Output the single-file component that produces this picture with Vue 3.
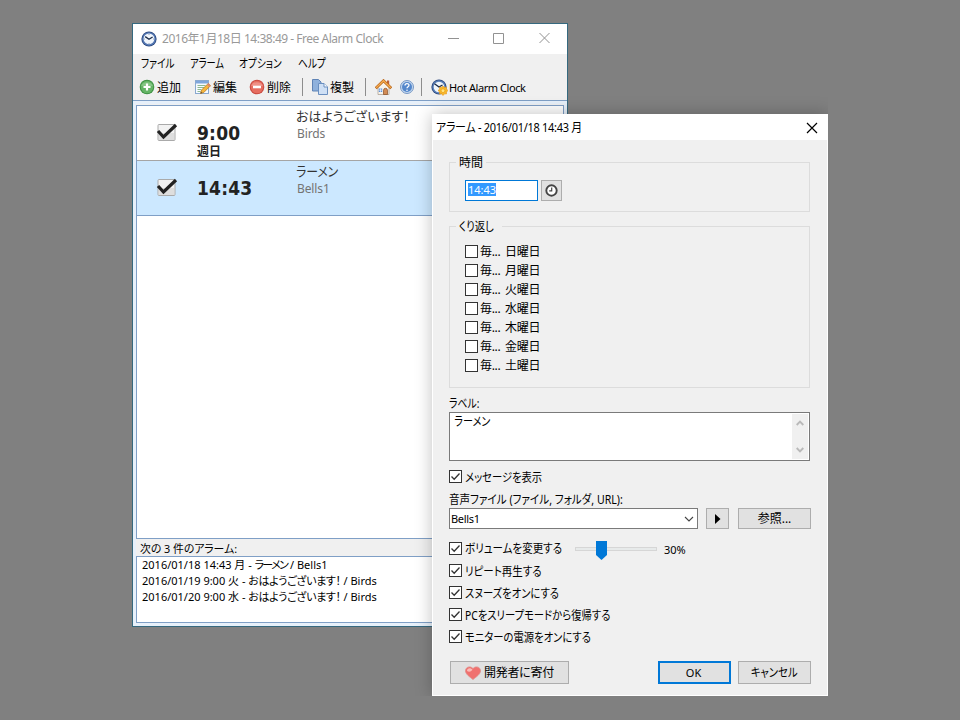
<script setup>
import { ref } from 'vue'

const menus = [
    { text: 'ファイル', key: 'file' },
    { text: 'アラーム', key: 'alarm' },
    { text: 'オプション', key: 'options' },
    { text: 'ヘルプ', key: 'help' }
]

const alarms = ref([
    { id: 1, time: '9:00', days: '週日', label: 'おはようございます！', sound: 'Birds', selected: false },
    { id: 2, time: '14:43', days: '', label: 'ラーメン', sound: 'Bells1', selected: true }
])

const upcoming = [
    { when: '2016/01/18 14:43 月 - ', label: 'ラーメン', sound: ' / Bells1', kana: 'katakana' },
    { when: '2016/01/19 9:00 火 - ', label: 'おはようございます！', sound: ' / Birds', kana: 'hiragana' },
    { when: '2016/01/20 9:00 水 - ', label: 'おはようございます！', sound: ' / Birds', kana: 'hiragana' }
]

const weekdays = ['日曜日', '月曜日', '火曜日', '水曜日', '木曜日', '金曜日', '土曜日']

const switches = [
    { text: 'リピート再生する', key: 'repeat' },
    { text: 'スヌーズをオンにする', key: 'snooze' },
    { text: 'PCをスリープモードから復帰する', key: 'wake' },
    { text: 'モニターの電源をオンにする', key: 'monitor' }
]

const volume = ref(30)
</script>

<template>
  <div class="desktop">
    <!-- Main window -->
    <div class="window main-window">
      <div class="titlebar">
        <svg class="app-icon" width="16" height="16" viewBox="0 0 16 16">
          <circle cx="8" cy="8" r="7.6" fill="#2b477c" />
          <circle cx="8" cy="8" r="6.8" fill="#5478b4" />
          <circle cx="8" cy="7.8" r="5.4" fill="#f1f6fc" />
          <path d="M4.200 5.600L8 8.200l3.600-2.200" fill="none" stroke="#1c2c48" stroke-width="1.300" />
          <path d="M8 3v1M8 12v1M3 8h1M12 8h1" stroke="#7b8dab" stroke-width=".8" />
        </svg>
        <span class="title-text">2016年1月18日 14:38:49 - Free Alarm Clock</span>
        <svg class="caption" width="104" height="12" viewBox="0 0 104 12">
          <path d="M0 6.500h11M45.500 1.500h10v10h-10zM91.500 1l10 10M101.500 1l-10 10" fill="none" stroke="#929292" />
        </svg>
      </div>
      <div class="menubar">
        <div v-for="m in menus" :key="m.key" :class="'menu-' + m.key"><span class="narrow">{{ m.text }}</span></div>
      </div>
      <div class="toolbar">
        <span class="tool tool-add">
          <svg width="16" height="16" viewBox="0 0 16 16">
            <circle cx="8" cy="8" r="7.300" fill="#3d9142" />
            <circle cx="8" cy="8" r="6.300" fill="#64b465" />
            <path d="M2.200 7a6 5 0 0 1 11.600 0z" fill="#9bd19a" opacity=".6" />
            <path d="M8 4.500v7M4.500 8h7" stroke="#fff" stroke-width="2.200" />
          </svg>
          <span>追加</span>
        </span>
        <span class="tool tool-edit">
          <svg width="16" height="16" viewBox="0 0 16 16">
            <rect x=".5" y="1.500" width="13" height="13" fill="#f6faff" stroke="#8aa9d0" />
            <path d="M1 2h12v2.500H1z" fill="#7fa6dc" />
            <path d="M2.500 6.500h8M2.500 8.500h7M2.500 10.500h4M2.500 12.500h3" stroke="#8db88f" />
            <path d="M5.500 14.500l1-3.500 6.800-6.500 2.200 2.200-6.700 6.800z" fill="#f5b63d" stroke="#b97b22" stroke-width=".8" />
            <path d="M12 5.800l1.500-1.500 2.200 2.200-1.500 1.400z" fill="#dc8570" />
            <path d="M5.500 14.500l.5-1.700 1.300 1.200z" fill="#5c4630" />
          </svg>
          <span>編集</span>
        </span>
        <span class="tool tool-delete">
          <svg width="16" height="16" viewBox="0 0 16 16">
            <circle cx="8" cy="8" r="7.300" fill="#c94a40" />
            <circle cx="8" cy="8" r="6.300" fill="#e66d5f" />
            <path d="M2.200 7a6 5 0 0 1 11.600 0z" fill="#f3aaa0" opacity=".6" />
            <path d="M4 8h8" stroke="#fff" stroke-width="2.600" />
          </svg>
          <span>削除</span>
        </span>
        <i class="sep"></i>
        <span class="tool tool-copy">
          <svg width="16" height="16" viewBox="0 0 16 16">
            <path d="M.5.500h6l2.500 2.500v9H.5z" fill="#8fb1dc" stroke="#5f83b5" />
            <path d="M6.500 4.500h5.500l3.500 3.500v7.500h-9z" fill="#cfe0f5" stroke="#6a8fc0" />
            <path d="M12 4.500v3.500h3.500" fill="#fff" stroke="#6a8fc0" />
          </svg>
          <span>複製</span>
        </span>
        <i class="sep"></i>
        <svg class="home" width="17" height="16" viewBox="0 0 17 16">
          <path d="M3 8l5.500-5.500L14 8v7.500H3z" fill="#f7f3ea" stroke="#a8998a" stroke-width=".7" />
          <path d="M12 1.500h2.200v5H12z" fill="#ba5f38" />
          <path d="M.8 9.200l7.700-7.500 7.700 7.500" fill="none" stroke="#b8651c" stroke-width="2.700" />
          <path d="M1.200 8.800l7.300-7.100 7.300 7.100" fill="none" stroke="#f5ac4e" stroke-width="1.300" />
          <path d="M8.500 15.500v-4.200a2 2 0 0 1 4 0v4.200z" fill="#d28b54" stroke="#8a4d24" stroke-width=".7" />
          <path d="M3.800 9.500h3.400v3.500H3.800z" fill="#5c93dd" />
          <path d="M5.500 9.500V13M3.800 11.200h3.400" stroke="#fff" stroke-width=".6" />
        </svg>
        <svg class="help" width="14" height="14" viewBox="0 0 14 14">
          <circle cx="7" cy="7" r="6.500" fill="#c5d9f0" stroke="#7898c4" />
          <circle cx="7" cy="7" r="5" fill="#5487cb" />
          <path d="M5 5.600c0-2.600 4-2.500 4-.3 0 1.400-2 1.400-2 2.900" fill="none" stroke="#fff" stroke-width="1.300" />
          <circle cx="7" cy="10.200" r=".8" fill="#fff" />
        </svg>
        <i class="sep"></i>
        <span class="tool tool-hot">
          <svg width="17" height="17" viewBox="0 0 17 17">
            <circle cx="8" cy="8" r="7.600" fill="#2b477c" />
            <circle cx="8" cy="8" r="6.700" fill="#5b80b9" />
            <circle cx="8" cy="8" r="5.300" fill="#eff5fb" />
            <path d="M3.500 4.800L8 8l3.500-2" fill="none" stroke="#1c2c48" stroke-width="1.400" />
            <path d="M12 7l1.300 1.500 2-.5.200 2L17 11.500l-1.500 1.500v2l-2-.2L12 16.500l-1.400-1.700-2 .2.100-2L7 11.500 8.700 10l-.1-2 2 .5z" fill="#f7b928" stroke="#e89318" stroke-width=".6" />
            <circle cx="12" cy="11.700" r="1.900" fill="#ffe681" stroke="#ed9b17" stroke-width=".7" />
          </svg>
          <span class="hot-text">Hot Alarm Clock</span>
        </span>
      </div>
      <div class="main-body">
        <div class="alarm-list">
          <div v-for="a in alarms" :key="a.id" class="alarm-row" :class="{ selected: a.selected }">
            <svg class="big-check" width="22" height="20" viewBox="0 0 22 20">
              <rect x="2" y="2.500" width="17" height="16" rx="1" fill="#f2f2f2" stroke="#aaa" />
              <path d="M3 11h15v7H3z" fill="#dedede" />
              <path d="M2 9l5.500 6L20 3" fill="none" stroke="#222" stroke-width="3.200" />
            </svg>
            <div class="when">
              <div class="time">{{ a.time }}</div>
              <div class="days">{{ a.days }}</div>
            </div>
            <div class="what">
              <div class="alarm-label">{{ a.label }}</div>
              <div class="sound">{{ a.sound }}</div>
            </div>
          </div>
        </div>
        <div class="next-title"><span class="narrow">次の 3 件のアラーム:</span></div>
        <div class="next-list">
          <div v-for="u in upcoming" :key="u.when">
            {{ u.when }}<span :class="u.kana">{{ u.label }}</span>{{ u.sound }}
          </div>
        </div>
      </div>
    </div>

    <!-- Alarm dialog -->
    <div class="window dialog">
      <div class="dialog-title">
        <span class="narrow">アラーム - 2016/01/18 14:43 月</span>
        <svg width="12" height="12" viewBox="0 0 12 12">
          <path d="M1 1l10 10M11 1L1 11" stroke="#000" stroke-width="1.200" />
        </svg>
      </div>
      <div class="dialog-body">
        <fieldset class="group group-time">
          <legend>時間</legend>
          <div class="time-row">
            <div class="time-input"><span>14:43</span></div>
            <div class="btn clock-btn">
              <svg width="13" height="13" viewBox="0 0 13 13">
                <circle cx="6.500" cy="6.500" r="5.200" fill="#fff" stroke="#444" stroke-width="1.900" />
                <path d="M6.700 3.500v3.300H4.200" fill="none" stroke="#444" stroke-width="1.200" />
              </svg>
            </div>
          </div>
        </fieldset>
        <fieldset class="group group-repeat">
          <legend><span class="narrow">くり返し</span></legend>
          <div class="day-list">
            <div v-for="d in weekdays" :key="d" class="day">
              <i class="box"></i><span class="every">毎...</span><span>{{ d }}</span>
            </div>
          </div>
        </fieldset>

        <div class="label-title"><span class="narrow">ラベル:</span></div>
        <div class="textarea">
          <span class="narrow">ラーメン</span>
          <div class="scroll">
            <svg width="8" height="6" viewBox="0 0 8 6"><path d="M.7 5L4 1.700 7.300 5" fill="none" stroke="#b9b9b9" stroke-width="1.900" /></svg>
            <svg width="8" height="6" viewBox="0 0 8 6"><path d="M.7 1L4 4.300 7.300 1" fill="none" stroke="#b9b9b9" stroke-width="1.900" /></svg>
          </div>
        </div>

        <div class="check-row row-message">
          <i class="box"><svg width="11" height="11" viewBox="0 0 11 11"><path d="M1.500 5.500l2.700 2.800 5.300-5.800" /></svg></i>
          <span class="narrow">メッセージを表示</span>
        </div>

        <div class="file-title"><span class="narrow">音声ファイル (ファイル, フォルダ, URL):</span></div>
        <div class="file-row">
          <div class="combo">
            <span>Bells1</span>
            <svg width="10" height="6" viewBox="0 0 10 6"><path d="M1 1l4 4 4-4" fill="none" stroke="#444" stroke-width="1.100" /></svg>
          </div>
          <div class="btn play-btn">
            <svg width="6" height="10" viewBox="0 0 6 10"><path d="M0 0l5.500 5L0 10z" /></svg>
          </div>
          <div class="btn browse-btn">参照...</div>
        </div>

        <div class="check-row row-volume">
          <i class="box"><svg width="11" height="11" viewBox="0 0 11 11"><path d="M1.500 5.500l2.700 2.800 5.300-5.800" /></svg></i>
          <div class="volume-label"><span class="narrow">ボリュームを変更する</span></div>
          <div class="slider">
            <div class="track"></div>
            <svg class="thumb" :style="{ left: volume * 0.7 + '%' }" width="11" height="19" viewBox="0 0 11 19">
              <path d="M0 0h11v14l-5.500 5L0 14z" fill="#0078d7" />
            </svg>
          </div>
          <span class="percent">{{ volume }}%</span>
        </div>
        <div v-for="s in switches" :key="s.key" class="check-row">
          <i class="box"><svg width="11" height="11" viewBox="0 0 11 11"><path d="M1.500 5.500l2.700 2.800 5.300-5.800" /></svg></i>
          <span class="narrow" :class="'row-' + s.key">{{ s.text }}</span>
        </div>

        <div class="actions">
          <div class="btn donate">
            <svg width="16" height="14" viewBox="0 0 16 14">
              <path d="M8 13.500C5 11 .5 8.500.500 4.600.500 1 5.500-.6 8 2.600 10.500-.6 15.500 1 15.500 4.600c0 3.900-4.500 6.400-7.500 8.900z" fill="#f0716f" stroke="#e08a87" stroke-width=".8" />
              <path d="M2 5c0-3 3.500-3.800 5.500-1.200C6 5.800 4 6.500 2 5z" fill="#fbbcb9" />
            </svg>
            <span>開発者に寄付</span>
          </div>
          <div class="btn ok">OK</div>
          <div class="btn cancel"><span class="narrow">キャンセル</span></div>
        </div>
      </div>
    </div>
  </div>
</template>

<style>
body {
    background: #808080;
    overflow: hidden;
}
</style>

<style scoped>
.desktop {
    position: relative;
    width: 960px;
    height: 720px;
    overflow: hidden;
    background: #808080;
    font-family: "Noto Sans", "Noto Sans CJK JP", sans-serif;
    font-size: 12px;
    line-height: 16px;
    color: #000;
    font-feature-settings: "palt";
    white-space: nowrap;
}

.desktop * { box-sizing: border-box; }

svg {
    display: block;
    flex: none;
}

.window {
    position: absolute;
    display: flex;
    flex-direction: column;
}

/* Condensed kana, as in the system UI font */
.narrow {
    display: inline-block;
    transform: scaleX(0.86);
    transform-origin: left center;
}

/* Main window */
.main-window {
    left: 132px;
    top: 23px;
    width: 436px;
    height: 604px;
    border: 1px solid #35697f;
    background: #f0f0f0;
}

.titlebar {
    display: flex;
    align-items: center;
    height: 30px;
    padding: 0 15px 0 8px;
    background: #fff;
    color: #999;
}

.app-icon { margin-bottom: 1px; }

.title-text {
    margin-left: 5px;
    letter-spacing: -0.48px;
}

.caption {
    margin-bottom: 2px;
    margin-left: auto;
}

.menubar {
    display: flex;
    height: 20px;
    padding: 2px 0 0 8px;
}

.menubar .narrow { transform: scaleX(0.81); }
.menu-file { width: 49px; }
.menu-alarm { width: 49px; }
.menu-options { width: 59px; }
.menu-alarm .narrow { transform: scaleX(0.77); }

.toolbar {
    display: flex;
    align-items: center;
    height: 27px;
    padding: 0 0 0 6px;
    border-bottom: 1px solid #7f9fc6;
}

.tool {
    display: flex;
    align-items: center;
    gap: 2px;
}

.tool > span { padding-top: 2px; }
.tool-add { width: 56px; }
.tool-edit { width: 54px; }
.tool-delete { width: 53px; }
.tool-copy { width: 53px; }

.sep {
    width: 1px;
    height: 18px;
    margin-right: 9px;
    background: #8d8d8d;
}

.help { margin: 0 7px 0 8px; }

.tool-hot { gap: 1px; }

.hot-text {
    font-size: 11px;
    letter-spacing: -0.43px;
}

.main-body {
    display: flex;
    flex-direction: column;
    flex: 1;
    padding: 4px 3px 3px;
    background: #f0f0f0;
    box-shadow: inset 0 0 0 3px #e7f0fa;
}

.alarm-list {
    height: 434px;
    border: 1px solid #7f9fc6;
    background: #fff;
}

.alarm-row {
    display: flex;
    height: 55px;
    border-bottom: 1px solid #a5a5a5;
}

.alarm-row.selected {
    background: #cce8ff;
    border-bottom-color: #7f9fc6;
}

.big-check { margin: 16px 0 0 19px; }

.when {
    width: 99px;
    margin-left: 19px;
}

.time {
    margin-top: 15px;
    font: bold 19px/24px "DejaVu Sans Condensed", "DejaVu Sans", sans-serif;
    font-stretch: condensed;
    letter-spacing: 0.2px;
    color: #222;
}

.days {
    line-height: 14px;
    font-weight: bold;
    color: #222;
}

.what { padding-top: 2px; }

.alarm-label {
    height: 17px;
    font-size: 13px;
    color: #333;
}

.selected .alarm-label {
    transform: scaleX(0.91);
    transform-origin: left center;
}

.sound {
    padding: 1px 0 0 1px;
    color: #747474;
    letter-spacing: -0.1px;
}

.next-title {
    height: 17px;
    padding: 2px 0 0 4px;
    font-size: 11.5px;
}

.next-title .narrow { transform: scaleX(0.94); }

.next-list {
    height: 67px;
    padding: 0 0 0 5px;
    border: 1px solid #7f9fc6;
    background: #fff;
    font-size: 11px;
    white-space: pre-line;
}

.katakana { letter-spacing: -1.7px; }
.hiragana { letter-spacing: -0.4px; }

/* Dialog */
.dialog {
    left: 432px;
    top: 114px;
    width: 396px;
    height: 582px;
    border: 1px solid #fff;
    background: #f0f0f0;
    box-shadow: 0 0 16px rgba(0, 0, 0, 0.25);
    clip-path: inset(-20px 0 0 -20px);
}

.dialog-title {
    display: flex;
    align-items: center;
    justify-content: space-between;
    height: 25px;
    padding: 0 9px 0 3px;
    background: #fff;
    letter-spacing: -0.3px;
}

.dialog-title .narrow { transform: scaleX(0.915); }

.dialog-body {
    display: flex;
    flex-direction: column;
    padding: 14px 16px 0;
}

.group {
    width: 361px;
    min-width: 0;
    margin: 0;
    padding: 0;
    border: 1px solid #dcdcdc;
}

legend {
    height: 17px;
    margin-left: 6px;
    padding: 1px 3px 0;
}

.group-time { height: 58px; }

.time-row {
    display: flex;
    gap: 3px;
    padding: 9px 0 0 15px;
}

.time-input {
    width: 73px;
    height: 21px;
    padding: 2px;
    border: 1px solid #0078d7;
    background: #fff;
    font-size: 11px;
    line-height: 14px;
}

.time-input span {
    display: inline-block;
    height: 13px;
    background: #3399ff;
    color: #fff;
    line-height: 13px;
}

.btn {
    display: flex;
    align-items: center;
    justify-content: center;
    border: 1px solid #adadad;
    background: #e1e1e1;
}

.clock-btn {
    width: 21px;
    height: 21px;
}

.group-repeat {
    height: 170px;
    margin-top: 6px;
}

.day-list {
    padding: 7px 0 0 15px;
    letter-spacing: -0.3px;
}

.day {
    display: flex;
    align-items: center;
    height: 19px;
}

.every {
    width: 25px;
    margin-left: 2px;
}

.box {
    flex: none;
    width: 13px;
    height: 13px;
    border: 1px solid #333;
    background: #fff;
}

.box path {
    fill: none;
    stroke: #333;
    stroke-width: 1.3;
}

.label-title {
    height: 16px;
    margin-top: 8px;
}

.label-title .narrow { transform: scaleX(0.82); }

.textarea {
    display: flex;
    justify-content: space-between;
    width: 361px;
    height: 49px;
    padding: 1px;
    border: 1px solid #7a7a7a;
    background: #fff;
}

.textarea .narrow {
    padding-left: 4px;
    transform: scaleX(0.84);
}

.scroll {
    display: flex;
    flex-direction: column;
    align-items: center;
    justify-content: space-between;
    width: 16px;
    padding: 6px 0;
    background: #f0f0f0;
}

.check-row {
    display: flex;
    align-items: center;
    height: 22px;
}

.check-row .box { margin-bottom: 1px; }

.check-row > span {
    margin-left: 3px;
    padding-top: 1px;
}

.row-message { margin-top: 5px; }
.row-repeat { transform: scaleX(0.875); }

.file-title {
    height: 16px;
    margin: 4px 0 0;
}

.file-title .narrow { transform: scaleX(0.88); }

.file-row {
    display: flex;
    height: 21px;
}

.combo {
    display: flex;
    align-items: center;
    justify-content: space-between;
    width: 249px;
    padding: 0 3px 0 1px;
    border: 1px solid #7a7a7a;
    background: #fff;
    font-size: 11px;
    letter-spacing: -0.3px;
}

.play-btn {
    width: 23px;
    margin-left: 8px;
}

.browse-btn {
    width: 73px;
    margin-left: 9px;
}

.row-volume { margin-top: 9px; }

.volume-label {
    width: 110px;
    margin-left: 3px;
}

.volume-label .narrow { transform: scaleX(0.875); }

.slider {
    position: relative;
    width: 82px;
    height: 22px;
    padding-top: 9px;
}

.track {
    height: 4px;
    border: 1px solid #d6d6d6;
    background: #e7eaea;
}

.thumb {
    position: absolute;
    top: 3px;
    margin-left: 4px;
}

.check-row .percent {
    margin-left: 7px;
    font-size: 11px;
}

.actions {
    display: flex;
    height: 23px;
    margin: 13px 0 0 1px;
}

.donate {
    width: 119px;
    gap: 3px;
}

.donate span {
    letter-spacing: -0.3px;
}

.ok {
    width: 73px;
    margin-left: 89px;
    padding-right: 2px;
    border: 2px solid #0078d7;
    font-size: 11px;
}

.cancel {
    width: 73px;
    margin-left: 7px;
}

.cancel .narrow { transform-origin: center; }
</style>
